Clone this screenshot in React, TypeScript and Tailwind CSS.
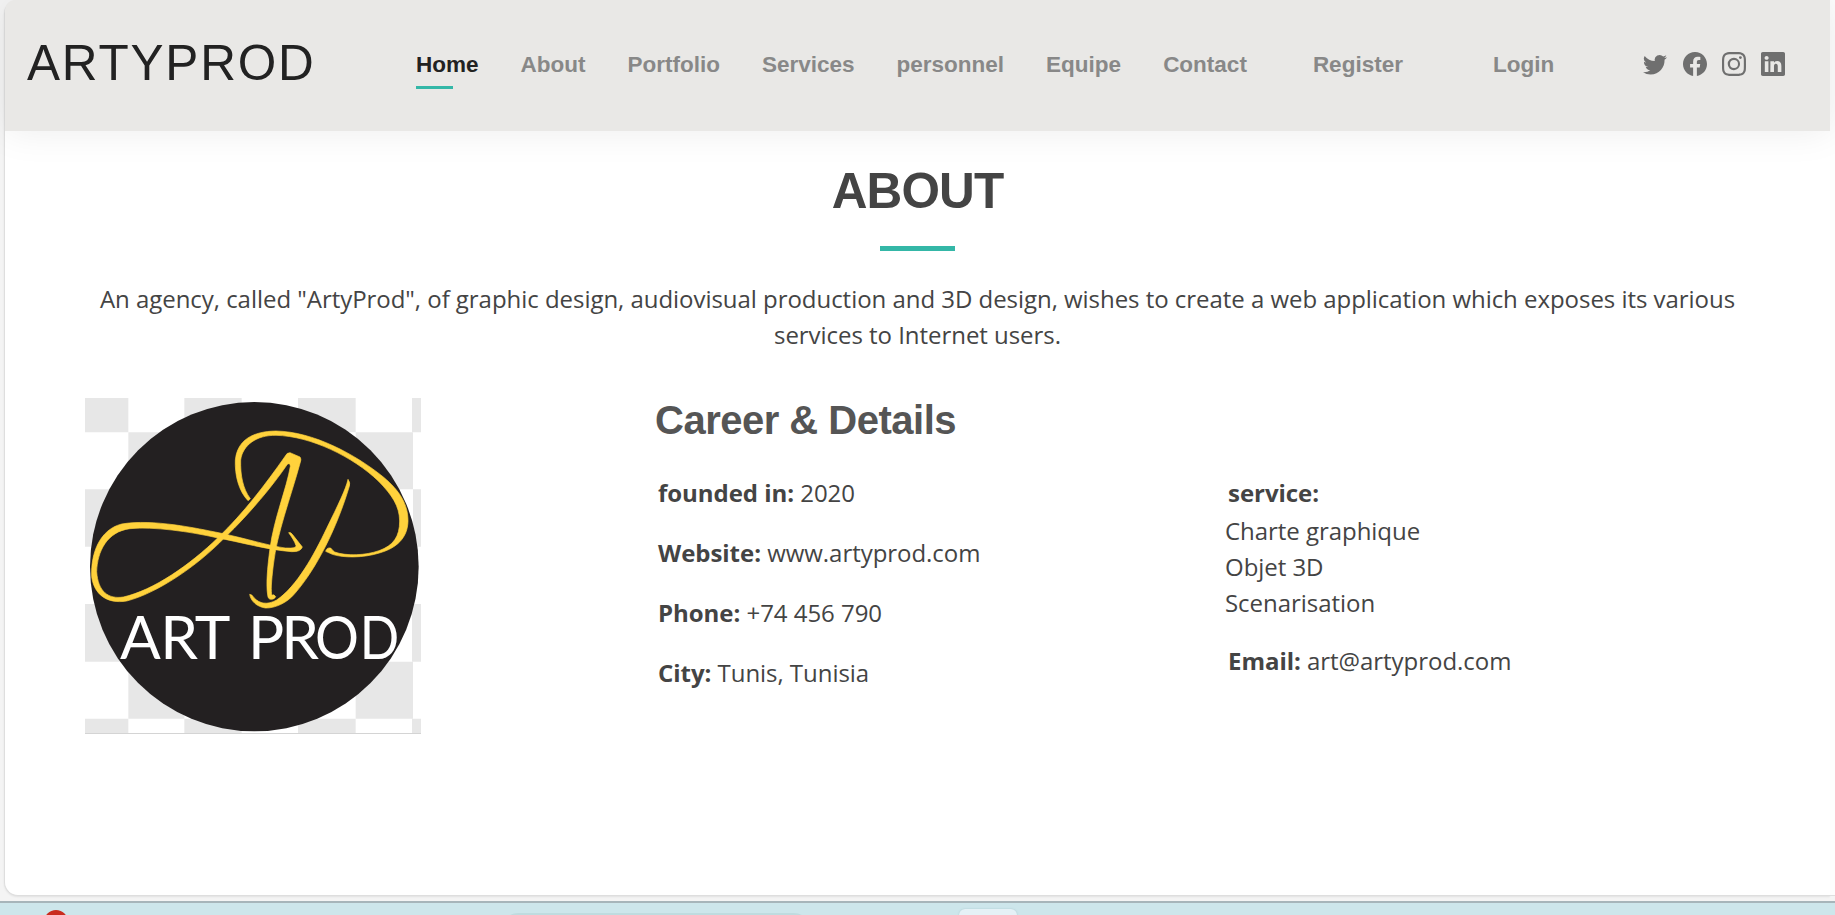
import { BsTwitter, BsFacebook, BsInstagram, BsLinkedin } from "react-icons/bs";

const links = [
  { label: "Home", active: true },
  { label: "About" },
  { label: "Portfolio" },
  { label: "Services" },
  { label: "personnel" },
  { label: "Equipe" },
  { label: "Contact" },
];

const details = [
  ["founded in:", "2020"],
  ["Website:", "www.artyprod.com"],
  ["Phone:", "+74 456 790"],
  ["City:", "Tunis, Tunisia"],
];

function Header() {
  return (
    <header className="relative flex h-[131px] shrink-0 items-center rounded-tl-[10px] bg-[#e9e8e6] pl-[22px] shadow-[0_0_38px_rgba(0,0,0,0.08)]">
      <h1 className="w-[389px] pb-[5px] text-[49.5px] leading-[58px] tracking-[1.8px] text-[#222]">ARTYPROD</h1>
      <nav className="flex gap-[42px] pb-px text-[22.5px] leading-[34px] font-bold text-[#888]">
        {links.map((l) => (
          <a key={l.label} className={l.active ? "relative text-[#222]" : "relative"}>
            {l.label}
            {l.active && <span className="absolute top-[38px] left-0 h-[3px] w-[37px] bg-[#34b7a7]" />}
          </a>
        ))}
        <a className="ml-6">Register</a>
        <a className="ml-12">Login</a>
      </nav>
      <div className="ml-[89px] flex gap-[15.4px] pb-[3px] text-2xl text-[#6f6f6f]">
        <BsTwitter />
        <BsFacebook />
        <BsInstagram />
        <BsLinkedin />
      </div>
    </header>
  );
}

function Logo() {
  return (
    <svg className="h-[336px] w-[336px] shrink-0" viewBox="45 39 1008 1008">
      <rect x="45" y="39" width="1008" height="1008" fill="#fff" />
      <g fill="#e7e7e7">
        <path d="M45 39h130v103H45zM343 39h172v103H343zM684 39h173v103H684zM1026 39h27v103h-27z" />
        <path d="M175 142h168v171H175zM515 142h169v171H515zM857 142h172v171H857z" />
        <path d="M45 313h130v172H45zM1029 313h24v172h-24z" />
        <path d="M175 485h168v172H175zM857 485h172v172H857z" />
        <path d="M45 657h130v173H45zM1026 657h27v173h-27z" />
        <path d="M175 830h168v171H175zM515 830h169v171H515zM857 830h172v171H857z" />
        <path d="M45 1001h130v46H45zM343 1001h172v46H343zM684 1001h173v46H684zM1026 1001h27v46h-27z" />
      </g>
      <path d="M45 1045.500h1008" stroke="#d4d4d4" strokeWidth="3" />
      <ellipse cx="553" cy="545" rx="493" ry="494" fill="#232021" />
      <g fill="#ffd23c" stroke="#ffd23c" strokeWidth="2">
        <path d="M534 347C506 318 494 270 496 225C502 165 548 139 618 138C730 140 856 208 940 276C990 318 1014 358 1014 408C1013 460 978 490 928 504C880 519 820 519 787 508L767 499Q770 487 782 489Q787 496 794 501C830 514 888 511 927 497C970 482 989 455 989 408C988 362 966 330 925 288C850 216 722 153 618 151C560 150 518 180 512 225C511 270 518 310 541 341Z" />
        <path d="M646 213Q650 203 660 203L690 216Q694 222 692 228C660 345 622 440 610 540C604 590 602 620 606 631Q612 626 617 635Q614 643 603 643Q594 643 593 630C588 600 592 550 600 490C612 400 650 310 661 244Q661 232 652 238C610 300 540 385 465 457C380 545 260 625 170 648C110 658 72 627 65 575C62 500 92 433 155 417C250 401 380 430 450 444C530 461 600 483 646 489Q680 491 678 482C674 468 664 455 656 443Q662 440 667 448L697 486Q692 501 665 500C590 494 510 471 440 458C360 440 250 424 180 431C110 440 82 500 80 560C84 620 115 643 160 636C250 616 360 540 445 457C520 385 585 300 646 213Z" />
        <path d="M834 283Q842 294 838 304C800 430 740 550 675 625C650 655 614 670 586 669C560 665 542 648 539 628Q546 628 552 638C568 656 592 661 620 645C680 605 732 510 770 430C804 360 828 312 834 283Z" />
      </g>
      <g fill="#fff" fontSize="181" className="font-[Lato,sans-serif]">
        <text x="150 271 374 534 634" y="821">
          ARTPR
        </text>
        <text transform="translate(735 821) scale(0.91 1)">O</text>
        <text transform="translate(869 821) scale(0.86 1)">D</text>
      </g>
    </svg>
  );
}

export default function App() {
  return (
    <div className="flex h-[915px] w-[1835px] flex-col overflow-hidden bg-[#f4f4f4] font-['Liberation_Sans',sans-serif]">
      <div className="flex h-[901px] pl-1">
        <div className="flex h-[896px] w-[1826px] flex-col rounded-l-[14px] border-b border-l border-[#dedede] bg-white shadow-[0_1px_2px_rgba(0,0,0,0.08)]">
          <Header />
          <main className="flex flex-col text-2xl leading-9 text-[#444] font-['Open_Sans',sans-serif]">
            <h2 className="mt-[31px] text-center font-['Liberation_Sans',sans-serif] text-[49.5px] leading-[58px] font-bold tracking-[-0.9px]">
              ABOUT
            </h2>
            <div className="mx-auto mt-[26px] h-[5px] w-[75px] bg-[#34b7a7]" />
            <p className="mx-auto mt-[30px] w-[1660px] text-center tracking-[-0.04px]">
              An agency, called "ArtyProd", of graphic design, audiovisual production and 3D design, wishes to create a
              web application which exposes its various services to Internet users.
            </p>
            <div className="mt-[45px] flex pl-20">
              <Logo />
              <section className="ml-[234px] w-[1100px]">
                <h3 className="-mt-px font-['Liberation_Sans',sans-serif] text-[40px] leading-[47px] font-bold tracking-[-0.5px] text-[#555]">
                  Career &amp; Details
                </h3>
                <div className="mt-[31px] flex tracking-[-0.04px]">
                  <ul className="flex w-[570px] flex-col gap-6 pl-[3px]">
                    {details.map(([name, value]) => (
                      <li key={name}>
                        <strong>{name}</strong> {value}
                      </li>
                    ))}
                  </ul>
                  <ul>
                    <li className="mb-[2px] pl-[3px]">
                      <strong>service:</strong>
                    </li>
                    <li>Charte graphique</li>
                    <li>Objet 3D</li>
                    <li>Scenarisation</li>
                    <li className="mt-[22px] pl-[3px]">
                      <strong>Email:</strong> art@artyprod.com
                    </li>
                  </ul>
                </div>
              </section>
            </div>
          </main>
        </div>
        <div className="h-[896px] grow border-b border-[#dedede] bg-[#fdfdfd]" />
      </div>
      <footer className="flex h-[14px] shrink-0 overflow-hidden border-t-2 border-[#a7b5ba] bg-[#cde6eb]">
        <div className="mt-[7px] ml-[44px] h-6 w-6 shrink-0 rounded-full bg-[#c92c1f]" />
        <div className="mt-[10px] ml-[434px] h-8 w-[308px] shrink-0 rounded-full bg-[#bfdbdf]" />
        <div className="mt-[6px] ml-[149px] h-12 w-[58px] shrink-0 rounded-md bg-[#e5f1f6] shadow-[0_0_2px_#a9c8ce]" />
      </footer>
    </div>
  );
}
